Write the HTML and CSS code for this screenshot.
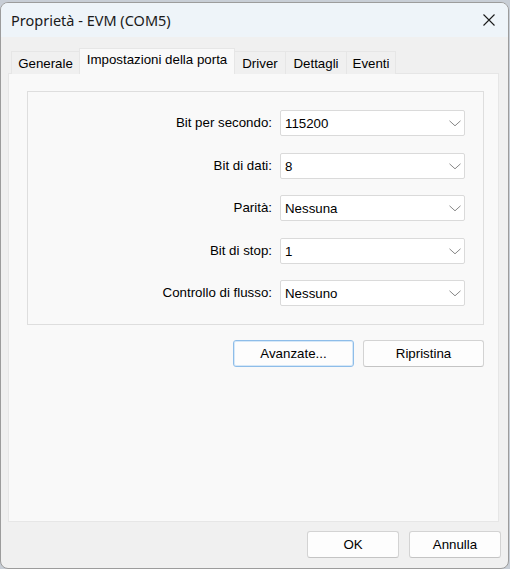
FILE: index.html
```html
<!DOCTYPE html>
<html lang="it">
<head>
<meta charset="utf-8">
<title>Proprietà - EVM (COM5)</title>
<link rel="stylesheet" href="styles.css">
</head>
<body>
<div class="window">
  <div class="titlebar">
    <span class="title">Proprietà - EVM (COM5)</span>
    <span class="close">
      <svg width="12" height="12" viewBox="0 0 12 12"><path d="M0.5 0.5 L11.5 11.5 M11.5 0.5 L0.5 11.5" stroke="#1b1b1b" stroke-width="1.1" fill="none"/></svg>
    </span>
  </div>
  <div class="content">
    <div class="tabs">
      <div class="tab t-gen">Generale</div>
      <div class="tab active t-imp">Impostazioni della porta</div>
      <div class="tab t-drv">Driver</div>
      <div class="tab t-det">Dettagli</div>
      <div class="tab t-eve">Eventi</div>
    </div>
    <div class="panel">
      <div class="group">
        <div class="row">
          <span class="label">Bit per secondo:</span>
          <div class="combo"><span>115200</span><svg class="chev" width="12" height="7" viewBox="0 0 12 7"><path d="M0.5 0.8 L6 5.8 L11.5 0.8" stroke="#888" stroke-width="1" fill="none"/></svg></div>
        </div>
        <div class="row">
          <span class="label">Bit di dati:</span>
          <div class="combo"><span>8</span><svg class="chev" width="12" height="7" viewBox="0 0 12 7"><path d="M0.5 0.8 L6 5.8 L11.5 0.8" stroke="#888" stroke-width="1" fill="none"/></svg></div>
        </div>
        <div class="row">
          <span class="label">Parità:</span>
          <div class="combo"><span>Nessuna</span><svg class="chev" width="12" height="7" viewBox="0 0 12 7"><path d="M0.5 0.8 L6 5.8 L11.5 0.8" stroke="#888" stroke-width="1" fill="none"/></svg></div>
        </div>
        <div class="row">
          <span class="label">Bit di stop:</span>
          <div class="combo"><span>1</span><svg class="chev" width="12" height="7" viewBox="0 0 12 7"><path d="M0.5 0.8 L6 5.8 L11.5 0.8" stroke="#888" stroke-width="1" fill="none"/></svg></div>
        </div>
        <div class="row">
          <span class="label">Controllo di flusso:</span>
          <div class="combo"><span>Nessuno</span><svg class="chev" width="12" height="7" viewBox="0 0 12 7"><path d="M0.5 0.8 L6 5.8 L11.5 0.8" stroke="#888" stroke-width="1" fill="none"/></svg></div>
        </div>
      </div>
      <div class="panel-buttons">
        <button class="btn wide default">Avanzate...</button>
        <button class="btn wide">Ripristina</button>
      </div>
    </div>
    <div class="footer">
      <button class="btn narrow">OK</button>
      <button class="btn narrow">Annulla</button>
    </div>
  </div>
</div>
</body>
</html>
```

FILE: styles.css
```css
* { box-sizing: border-box; }

html, body {
  margin: 0;
  padding: 0;
}

body {
  width: 510px;
  height: 569px;
  background: #c8ced6;
  overflow: hidden;
  font-family: "Liberation Sans", Arial, sans-serif;
  font-size: 13.3px;
  color: #000;
}

.window {
  margin-top: 2px;
  width: 509px;
  height: 567px;
  border: 1px solid #9c9c9c;
  border-radius: 8px;
  overflow: hidden;
  display: flex;
  flex-direction: column;
  background: #f0f0f0;
}

.titlebar {
  height: 34px;
  flex: none;
  background: #eef4f9;
  display: flex;
  align-items: center;
  justify-content: space-between;
  padding: 0 13px 0 10px;
}

.title {
  font-family: "Noto Sans", "Open Sans", sans-serif;
  font-size: 14.5px;
  color: #1a1a1a;
}

.close {
  display: flex;
  align-items: center;
}

.content {
  flex: 1;
  display: flex;
  flex-direction: column;
  padding-top: 11px;
}

.tabs {
  display: flex;
  align-items: flex-end;
  margin-left: 10px;
  height: 25px;
  position: relative;
  z-index: 1;
}

.tab {
  border: 1px solid #e6e6e6;
  border-bottom: none;
  background: #f0f0f0;
  display: flex;
  align-items: center;
  justify-content: center;
  white-space: nowrap;
  margin-bottom: -1px;
  height: 23px;
}

.tab.active {
  height: 26px;
  background: #f9f9f9;
  align-items: flex-start;
  padding-top: 3px;
}

.t-gen { width: 68px; border-right: none; }
.t-imp { width: 156px; }
.t-drv { width: 51px; border-left: none; }
.t-det { width: 61px; border-left: none; }
.t-eve { width: 49px; border-left: none; }

.panel {
  margin-left: 7px;
  width: 491px;
  height: 449px;
  flex: none;
  background: #f9f9f9;
  border: 1px solid #e6e6e6;
  padding: 17px 14px 0 18px;
}

.group {
  border: 1px solid #dedede;
  height: 234px;
  padding-top: 18px;
  display: flex;
  flex-direction: column;
  gap: 16.5px;
}

.row {
  display: flex;
  align-items: center;
  height: 26px;
}

.label {
  width: 252px;
  text-align: right;
  padding-right: 8px;
  flex: none;
  margin-top: -1px;
}

.combo {
  width: 185px;
  height: 26px;
  background: #fff;
  border: 1px solid #dadada;
  border-radius: 2px;
  display: flex;
  align-items: center;
  justify-content: space-between;
  padding: 0 3px 0 4px;
}

.combo span {
  margin-top: 1px;
}

.chev {
  margin-top: 1px;
}

.panel-buttons {
  display: flex;
  justify-content: flex-end;
  gap: 9px;
  margin-top: 15px;
}

.btn {
  font-family: "Liberation Sans", Arial, sans-serif;
  font-size: 13.3px;
  color: #000;
  height: 27px;
  background: #fdfdfd;
  border: 1px solid #d3d3d3;
  border-bottom-color: #c4c4c4;
  border-radius: 3px;
  padding: 0;
}

.btn.wide { width: 121px; }
.btn.narrow { width: 92px; }

.btn.default {
  border: 1px solid #8ebde9;
  box-shadow: inset 0 0 0 1px #d6e8f8;
}

.footer {
  display: flex;
  justify-content: flex-end;
  gap: 10px;
  margin-top: 9px;
  padding-right: 7px;
}
```
